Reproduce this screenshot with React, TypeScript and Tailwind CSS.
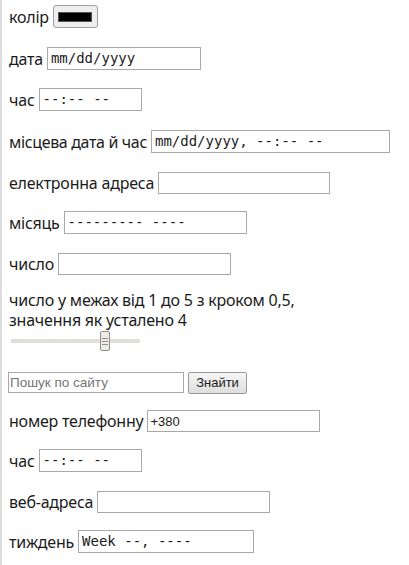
import React from "react";

const label = "text-[16px] tracking-[-0.22px] text-[#1b1b1b] whitespace-nowrap";
const boxBase =
  "h-[23px] border border-[#a9a9a9] bg-white flex items-center px-[3px] text-[14px] text-[#1b1b1b] whitespace-pre";
const mono = { fontFamily: '"DejaVu Sans Mono", "Liberation Mono", monospace' } as const;

function MonoBox({ w, text }: { w: string; text: string }) {
  return (
    <div className={`${boxBase} ${w}`} style={mono}>
      {text}
    </div>
  );
}

function TextBox({ w, value, h = "h-[22px]" }: { w: string; value?: string; h?: string }) {
  return (
    <input
      readOnly
      defaultValue={value}
      className={`${h} ${w} border border-[#a9a9a9] bg-white px-[2px] text-[13px] text-[#1b1b1b] outline-none`}
      style={{ fontFamily: '"Liberation Sans", Arial, sans-serif' }}
    />
  );
}

export default function App() {
  return (
    <div
      className="min-h-[565px] w-[409px] bg-white border-l-2 border-[#dcdcdc] pl-[7px] flex flex-col"
      style={{ fontFamily: '"Noto Sans", sans-serif' }}
    >
      <div className="mt-[5px] h-[23px] flex items-center gap-[4px]">
        <span className={label}>колір</span>
        <div className="w-[45px] h-[23px] rounded-[3px] border border-[#a0a0a0] bg-[#eeeeee] flex items-center justify-center">
          <div className="w-[34px] h-[10px] bg-black border border-[#555]" />
        </div>
      </div>

      <div className="mt-[19px] h-[23px] flex items-center gap-[4px]">
        <span className={label}>дата</span>
        <MonoBox w="w-[154px]" text="mm/dd/yyyy" />
      </div>

      <div className="mt-[18px] h-[23px] flex items-center gap-[4px]">
        <span className={label}>час</span>
        <MonoBox w="w-[103px]" text="--:-- --" />
      </div>

      <div className="mt-[19px] h-[23px] flex items-center gap-[4px]">
        <span className={`${label} tracking-[-0.35px]`}>місцева дата й час</span>
        <MonoBox w="w-[239px]" text="mm/dd/yyyy, --:-- --" />
      </div>

      <div className="mt-[18px] h-[23px] flex items-center gap-[4px]">
        <span className={label}>електронна адреса</span>
        <TextBox w="w-[172px]" />
      </div>

      <div className="mt-[17px] h-[23px] flex items-center gap-[4px]">
        <span className={label}>місяць</span>
        <MonoBox w="w-[183px]" text="--------- ----" />
      </div>

      <div className="mt-[18px] h-[23px] flex items-center gap-[4px]">
        <span className={label}>число</span>
        <TextBox w="w-[173px]" />
      </div>

      <div className={`mt-[15px] leading-[20px] ${label}`}>
        <div>число у межах від 1 до 5 з кроком 0,5,</div>
        <div>значення як усталено 4</div>
      </div>

      <div className="mt-[1px] h-[20px] flex items-center">
        <div className="relative ml-[2px] w-[129px] h-[4px] bg-[#e2dfda] rounded-[1px]">
          <div className="absolute left-[89px] top-[-8px] w-[10px] h-[20px] bg-[#ecebe8] border border-[#8f8d89] rounded-[2px] flex flex-col items-center justify-center gap-[2px]">
            <div className="w-[6px] h-px bg-[#8f8d89]" />
            <div className="w-[6px] h-px bg-[#8f8d89]" />
            <div className="w-[6px] h-px bg-[#8f8d89]" />
          </div>
        </div>
      </div>

      <div className="mt-[21px] h-[21px] flex items-center gap-[4px] -ml-px">
        <input
          readOnly
          placeholder="Пошук по сайту"
          className="w-[176px] h-[21px] border border-[#a9a9a9] bg-white px-[1px] text-[13.5px] text-[#1b1b1b] placeholder:text-[#757575] outline-none"
          style={{ fontFamily: '"Liberation Sans", Arial, sans-serif' }}
        />
        <button
          className="w-[59px] h-[22px] rounded-[2px] border border-[#9a9a9a] bg-gradient-to-b from-[#f6f6f6] to-[#dedede] text-[13px] font-normal text-[#1b1b1b]"
          style={{ fontFamily: '"Liberation Sans", Arial, sans-serif' }}
        >
          Знайти
        </button>
      </div>

      <div className="mt-[17px] h-[22px] flex items-center gap-[4px]">
        <span className={label}>номер телефонну</span>
        <TextBox w="w-[173px]" value="+380" />
      </div>

      <div className="mt-[17px] h-[23px] flex items-center gap-[4px]">
        <span className={label}>час</span>
        <MonoBox w="w-[103px]" text="--:-- --" />
      </div>

      <div className="mt-[19px] h-[22px] flex items-center gap-[4px]">
        <span className={label}>веб-адреса</span>
        <TextBox w="w-[173px]" />
      </div>

      <div className="mt-[17px] h-[23px] flex items-center gap-[4px]">
        <span className={label}>тиждень</span>
        <MonoBox w="w-[176px]" text="Week --, ----" />
      </div>
    </div>
  );
}
